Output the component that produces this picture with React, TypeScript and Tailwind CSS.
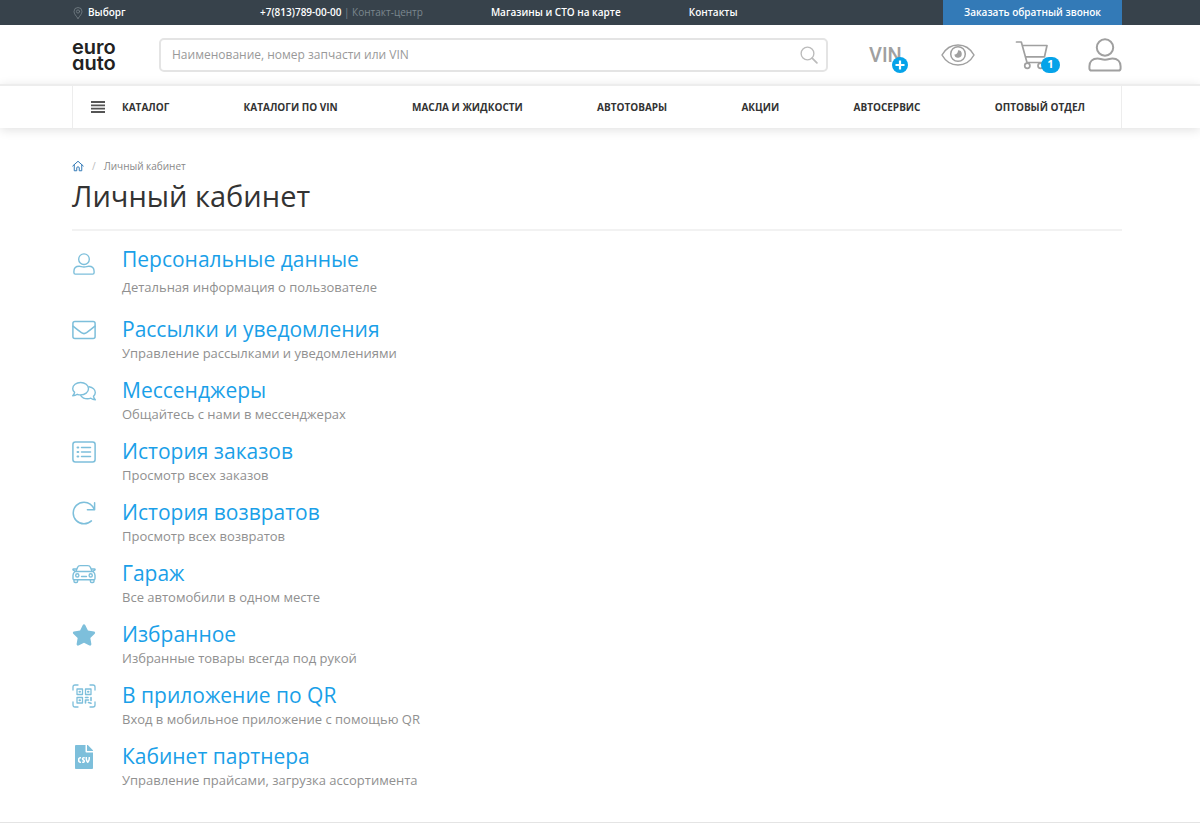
import { useState } from 'react';
import type { ReactNode, SVGProps } from 'react';
import { FaFileCsv, FaStar } from 'react-icons/fa';

const navItems = ['КАТАЛОГИ ПО VIN', 'МАСЛА И ЖИДКОСТИ', 'АВТОТОВАРЫ', 'АКЦИИ', 'АВТОСЕРВИС', 'ОПТОВЫЙ ОТДЕЛ'];

function Icon({ children, ...props }: SVGProps<SVGSVGElement>) {
  return (
    <svg
      viewBox="0 0 24 24"
      width="24"
      height="24"
      fill="none"
      stroke="currentColor"
      strokeWidth="1.5"
      strokeLinecap="round"
      strokeLinejoin="round"
      aria-hidden="true"
      {...props}
    >
      {children}
    </svg>
  );
}

const UserIcon = (props: SVGProps<SVGSVGElement>) => (
  <Icon {...props}>
    <circle cx="12" cy="6.7" r="5.8" />
    <path d="M6.800 14.500c1.700 0 2.800.8 5.200.8s3.500-.8 5.200-.8c3.700 0 5.800 2.300 5.800 5.500v1.500c0 .9-.6 1.500-1.500 1.500h-19c-.9 0-1.500-.6-1.500-1.500V20c0-3.200 2.100-5.500 5.800-5.500z" />
  </Icon>
);

const MailIcon = () => (
  <Icon>
    <rect x="0.9" y="3.6" width="22.2" height="16.8" rx="2" />
    <path d="M1 8.200c3 2.400 6.200 4.900 8.400 6.500 1.700 1.200 3.500 1.200 5.200 0 2.200-1.600 5.400-4.100 8.400-6.500" />
  </Icon>
);

const ChatIcon = () => (
  <Icon strokeWidth="1.4">
    <path d="M8.600 3.500c4.400 0 7.900 2.700 7.900 6.200s-3.500 6.200-7.900 6.200c-1.200 0-2.300-.2-3.300-.6-1.200.9-2.800 1.500-4.600 1.500 1-1 1.700-2.200 1.900-3.500C1.400 12.300.7 11 .7 9.700c0-3.500 3.500-6.200 7.900-6.200z" />
    <path d="M17 7.700c3.600.6 6.300 3.100 6.300 5.900 0 1.500-.7 2.700-1.800 3.700.2 1.300.8 2.400 1.800 3.400-1.800 0-3.300-.6-4.500-1.500-1 .4-2.100.6-3.300.6-2.900 0-5.400-1.300-6.700-3.200" />
  </Icon>
);

const ListIcon = () => (
  <Icon>
    <rect x="0.9" y="2" width="22.2" height="20" rx="2.500" />
    <path d="M9.500 7.500h9M9.500 12h9M9.500 16.500h9" />
    <path d="M5.600 7.500h.6M5.600 12h.6M5.600 16.500h.6" strokeWidth="2.200" />
  </Icon>
);

const RedoIcon = () => (
  <Icon>
    <path d="M22.600 1.800v7H15.400M22.300 8.500C20.400 4 16.600 1.200 12 1.200 6 1.200 1.200 6 1.200 12S6 22.800 12 22.800c2.900 0 5.500-1.100 7.400-2.900" />
  </Icon>
);

const CarIcon = () => (
  <Icon strokeWidth="1.4">
    <path d="M3 9.500h18c1.300 1 2 2 2 3.700v3.300c0 .8-.5 1.200-1.200 1.200H2.200c-.7 0-1.200-.4-1.200-1.200v-3.300c0-1.700.7-2.700 2-3.700zM4 9.300l1.500-3.800c.5-1.300 1.400-1.900 2.700-1.900h7.600c1.300 0 2.200.6 2.700 1.900L20 9.300M4.200 7H1.500c-.7 0-.8.9-.3 1.200l1.800.9M19.800 7h2.700c.7 0 .8.9.3 1.200l-1.800.9" />
    <path d="M2 17.700v1.600c0 .8.4 1.200 1.200 1.200h1.200c.8 0 1.200-.4 1.200-1.200v-1.600M18.400 17.700v1.600c0 .8.4 1.200 1.200 1.200h1.200c.8 0 1.200-.4 1.200-1.200v-1.600" />
    <circle cx="5.300" cy="13.400" r="1.600" />
    <circle cx="18.700" cy="13.400" r="1.600" />
    <path d="M9.500 14.500h5" />
  </Icon>
);

const QrIcon = () => (
  <Icon strokeWidth="1.3">
    <path d="M1 6V3c0-1.300.7-2 2-2h3M18 1h3c1.300 0 2 .7 2 2v3M23 18v3c0 1.300-.7 2-2 2h-3M6 23H3c-1.300 0-2-.7-2-2v-3" />
    <path d="M5 5h5.500v5.500H5zM13.500 5H19v5.500h-5.500zM5 13.500h5.500V19H5z" />
    <path d="M7.500 7.750h.5M16 7.750h.5M7.500 16.250h.5" strokeWidth="2" />
    <path d="M13.500 13.500H16M19 13.500v3M16.500 16h-3v3M16.500 18.500l2.500.7" strokeWidth="1.600" />
  </Icon>
);

const EyeIcon = () => (
  <svg viewBox="0 0 34 24" width="34" height="24" fill="none" stroke="currentColor" strokeWidth="1.5" aria-hidden="true">
    <path d="M1 12C4.500 5.800 10.200 2 17 2s12.500 3.800 16 10c-3.500 6.200-9.200 10-16 10S4.500 18.200 1 12z" />
    <circle cx="17" cy="11" r="7.300" />
    <path d="M17 7.300a3.700 3.700 0 1 1-3.600 4.200c1.700.3 3.800-1.500 3.600-4.200z" fill="currentColor" stroke="none" />
  </svg>
);

const CartIcon = () => (
  <svg viewBox="0 0 34 32" width="34" height="32" fill="none" stroke="currentColor" strokeWidth="1.7" aria-hidden="true">
    <path d="M1.500 3h4.800l5.700 20.500h14M7.500 6.500H32l-2.500 11.300H10.500" strokeLinejoin="round" strokeLinecap="round" />
    <circle cx="12.300" cy="26.800" r="2.600" />
    <circle cx="25.600" cy="26.800" r="2.600" />
  </svg>
);

type Section = { title: string; text: string; icon: ReactNode };

const sections: Section[] = [
  { title: 'Персональные данные', text: 'Детальная информация о пользователе', icon: <UserIcon width="22" height="24" /> },
  { title: 'Рассылки и уведомления', text: 'Управление рассылками и уведомлениями', icon: <MailIcon /> },
  { title: 'Мессенджеры', text: 'Общайтесь с нами в мессенджерах', icon: <ChatIcon /> },
  { title: 'История заказов', text: 'Просмотр всех заказов', icon: <ListIcon /> },
  { title: 'История возвратов', text: 'Просмотр всех возвратов', icon: <RedoIcon /> },
  { title: 'Гараж', text: 'Все автомобили в одном месте', icon: <CarIcon /> },
  { title: 'Избранное', text: 'Избранные товары всегда под рукой', icon: <FaStar size={24} /> },
  { title: 'В приложение по QR', text: 'Вход в мобильное приложение с помощью QR', icon: <QrIcon /> },
  { title: 'Кабинет партнера', text: 'Управление прайсами, загрузка ассортимента', icon: <FaFileCsv size={24} /> },
];

function TopBar() {
  return (
    <div className="flex h-[25px] items-center bg-[#37424b] pr-[78px] pl-[72px] text-[10px] font-semibold whitespace-nowrap text-white">
      <a href="#" className="flex w-[188px] items-center gap-1">
        <Icon width="12" height="12" className="text-[#7b858c]">
          <path d="M12 23C8 17.500 4 13.500 4 9a8 8 0 0 1 16 0c0 4.500-4 8.500-8 14z" />
          <circle cx="12" cy="9" r="3.200" />
        </Icon>
        Выборг
      </a>
      <div className="flex items-center gap-[68px]">
        <span>
          <a href="tel:+78137890000">+7(813)789-00-00</a>
          <span className="font-normal text-[#7b878e]"> | Контакт-центр</span>
        </span>
        <a href="#">Магазины и СТО на карте</a>
        <a href="#">Контакты</a>
      </div>
      <button type="button" className="ml-auto h-full w-[179px] bg-[#337ab7]">
        Заказать обратный звонок
      </button>
    </div>
  );
}

function Header() {
  const [query, setQuery] = useState('');

  return (
    <header className="flex h-[59px] items-center pr-[78px] pl-[72px]">
      <a
        href="#"
        className="w-[87px] font-['Inter',sans-serif] text-[20px] leading-4 font-semibold text-[#222] [font-feature-settings:'cv11']"
      >
        euro
        <br />
        auto
      </a>
      <form className="flex h-[34px] flex-1 items-center rounded-[5px] border-2 border-[#e4e4e4] pr-2 pl-[11px]">
        <input
          type="text"
          aria-label="Поиск"
          value={query}
          onChange={(e) => setQuery(e.target.value)}
          placeholder="Наименование, номер запчасти или VIN"
          className="min-w-0 flex-1 text-[12px] outline-none placeholder:text-[#999]"
        />
        <button type="button" aria-label="Найти" className="text-[#bbb]">
          <Icon width="18" height="18" strokeWidth="1.8">
            <circle cx="10" cy="10" r="8.500" />
            <path d="M16.200 16.200l6.300 6.300" strokeWidth="2.300" />
          </Icon>
        </button>
      </form>
      <div className="ml-[41px] flex items-center text-[#a0a0a0]">
        <a href="#" className="relative w-[72px] font-['Roboto',sans-serif] text-[20px] leading-8 font-medium">
          VIN
          <svg viewBox="0 0 16 16" className="absolute top-[18px] left-[23px] h-4 w-4" aria-hidden="true">
            <circle cx="8" cy="8" r="8" fill="#06a3e9" />
            <path d="M8 3.500v9M3.500 8h9" stroke="#fff" strokeWidth="2.200" />
          </svg>
        </a>
        <a href="#" aria-label="Просмотренные" className="w-[74px]">
          <EyeIcon />
        </a>
        <a href="#" aria-label="Корзина" className="relative w-[73px]">
          <CartIcon />
          <span className="absolute top-[18px] left-[26px] flex h-4 w-[19px] items-center justify-center rounded-full bg-[#06a3e9] text-[11px] font-bold text-white">
            1
          </span>
        </a>
        <a href="#" aria-label="Личный кабинет">
          <UserIcon width="34" height="34" strokeWidth="1.4" />
        </a>
      </div>
    </header>
  );
}

function Nav() {
  return (
    <nav className="border-t-2 border-[#ededed] pr-[78px] pl-[72px] shadow-[0_2px_10px_rgba(0,0,0,0.12)]">
      <div className="flex h-[42px] items-center justify-between border-x border-[#ededed] pr-9 pl-[18px] text-[10px] font-bold whitespace-nowrap text-[#333]">
        <a href="#" className="flex items-center gap-[17px]">
          <svg viewBox="0 0 14 12" className="h-3 w-[14px] text-[#555]" aria-hidden="true">
            <path d="M0 1h14M0 4.300h14M0 7.700h14M0 11h14" stroke="currentColor" strokeWidth="1.8" />
          </svg>
          КАТАЛОГ
        </a>
        {navItems.map((item) => (
          <a key={item} href="#">
            {item}
          </a>
        ))}
      </div>
    </nav>
  );
}

export default function App() {
  return (
    <div className="bg-white font-['Open_Sans',sans-serif]">
      <TopBar />
      <Header />
      <Nav />
      <main className="border-b border-[#e4e4e4] pt-[30px] pr-[78px] pb-5 pl-[72px]">
        <div className="flex h-4 items-center gap-2 text-[10px] text-[#888]">
          <a href="#" aria-label="Главная" className="text-[#337ab7]">
            <Icon width="12" height="12" strokeWidth="2">
              <path d="M1.500 12L12 2.500 22.500 12M4.500 10v11.500h5V16c0-3.300 5-3.300 5 0v5.500h5V10" />
            </Icon>
          </a>
          <span className="text-[#bbb]">/</span>
          <span>Личный кабинет</span>
        </div>
        <h1 className="border-b-2 border-[#f2f2f2] pt-1 pb-[15px] text-[29px] leading-9 text-[#333]">Личный кабинет</h1>
        <ul className="mt-[13px]">
          {sections.map(({ title, text, icon }, i) => (
            <li key={title} className={i === 0 ? 'mb-[18px] flex' : 'mb-[13px] flex'}>
              <div className={i === 0 ? 'mt-2 flex h-6 w-[50px] text-[#7dbfdb]' : 'mt-1 flex h-6 w-[50px] text-[#7dbfdb]'}>
                <span className="flex w-6 items-center justify-center">{icon}</span>
              </div>
              <div>
                <h2 className="text-[21px] leading-[30px] text-[#1a9fe8]">
                  <a href="#">{title}</a>
                </h2>
                <p className={i === 0 ? 'mt-1 text-[13px] leading-[18px] text-[#909090]' : 'text-[13px] leading-[18px] text-[#909090]'}>
                  {text}
                </p>
              </div>
            </li>
          ))}
        </ul>
      </main>
    </div>
  );
}
